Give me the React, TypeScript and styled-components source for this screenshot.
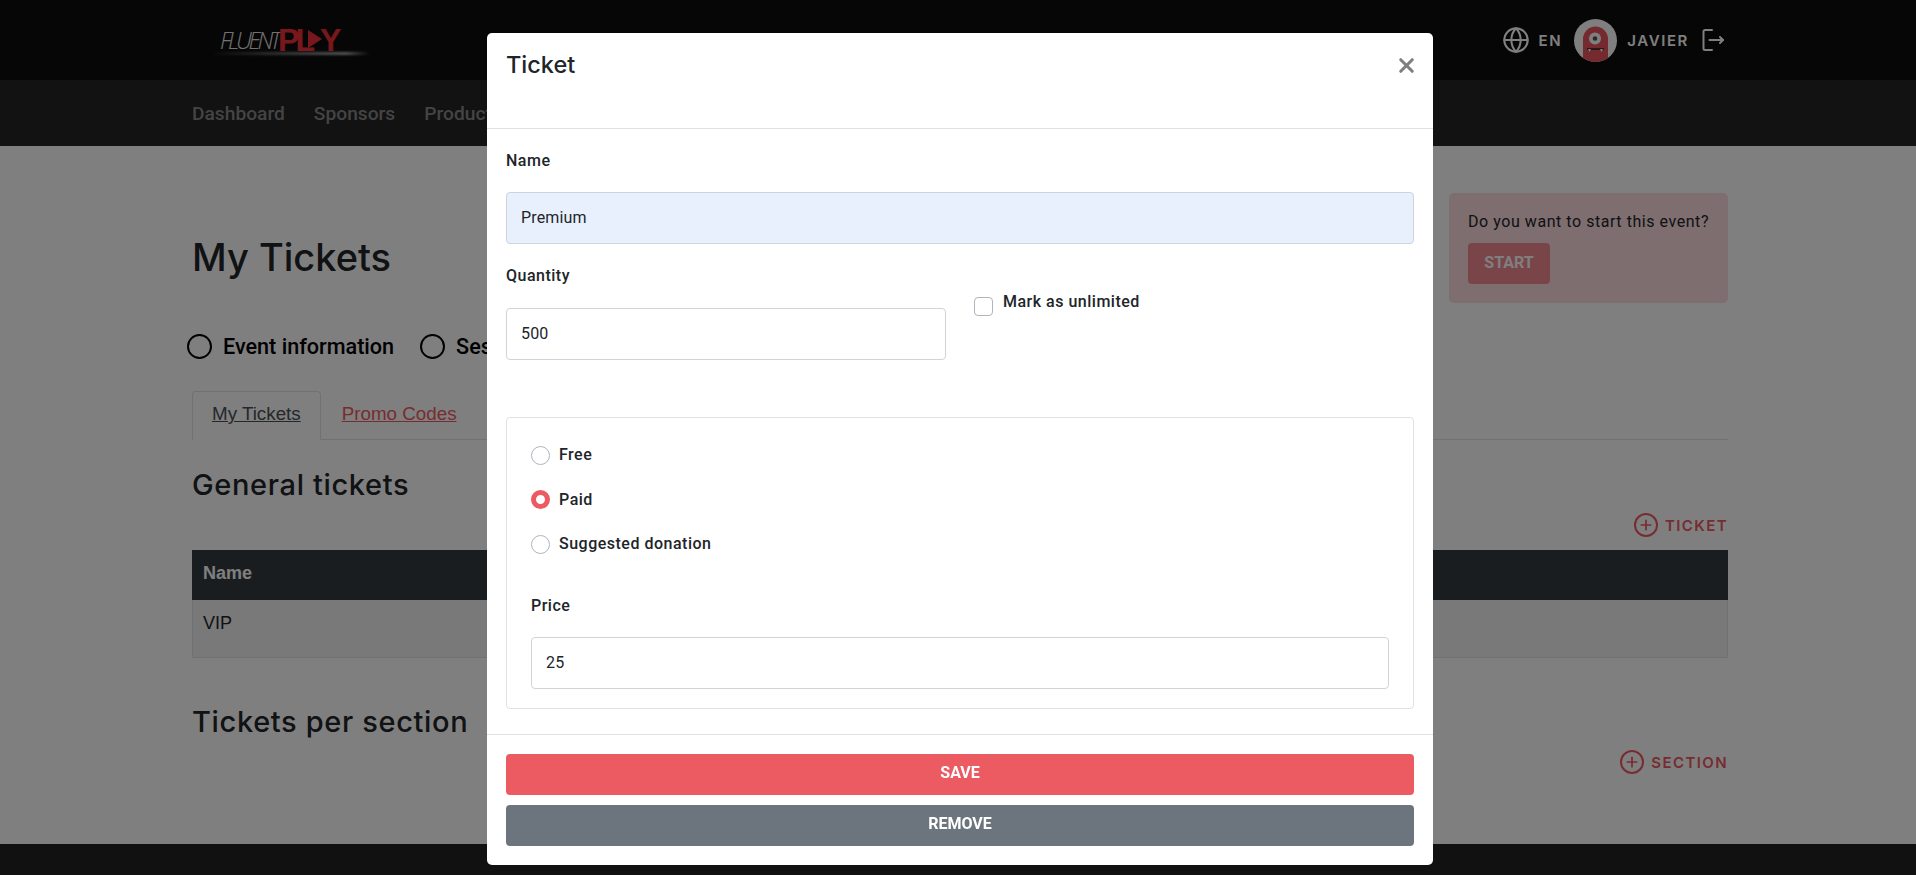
import styled, { createGlobalStyle } from "styled-components";
import { Globe, Plus, X } from "lucide-react";

const GlobalStyle = createGlobalStyle`
  html, body {
    margin: 0;
    padding: 0;
    height: 100%;
    background: #ffffff;
    overflow: hidden;
    font-family: Roboto, sans-serif;
    color: #212529;
  }
  * {
    box-sizing: border-box;
  }
`;

const Page = styled.div`
  display: flex;
  flex-direction: column;
  height: 875px;
`;

const TopBar = styled.header`
  display: flex;
  align-items: center;
  justify-content: space-between;
  height: 80px;
  flex: none;
  padding: 0 192px 0 220px;
  background: #0c0c0c;
`;

const Logo = styled.div`
  position: relative;
  display: flex;
  align-items: center;
  height: 40px;
  width: 150px;
  &::after {
    content: "";
    position: absolute;
    left: -10px;
    right: 0;
    bottom: 5px;
    height: 3px;
    background: linear-gradient(90deg, transparent, #555 35%, #aaa 85%, transparent);
    filter: blur(1px);
  }
`;

const LogoLight = styled.span`
  font-family: "Open Sans", sans-serif;
  font-style: italic;
  font-weight: 300;
  font-size: 23px;
  letter-spacing: -3.2px;
  color: #e4e4e4;
`;

const LogoBold = styled.span`
  display: flex;
  align-items: center;
  font-family: "Liberation Sans", sans-serif;
  font-weight: 700;
  font-size: 32px;
  letter-spacing: -4px;
  color: #f03038;
  line-height: 1;
`;

const LogoPlay = styled.i`
  display: block;
  width: 0;
  height: 0;
  margin: -3px -2px 0 -3px;
  border-left: 14px solid #f03038;
  border-top: 9px solid transparent;
  border-bottom: 9px solid transparent;
`;

const UserArea = styled.div`
  display: flex;
  align-items: center;
  color: #ffffff;
  svg {
    display: block;
  }
`;

const BarLabel = styled.span<{ $left: number; $right: number }>`
  font-family: Inter, sans-serif;
  font-weight: 600;
  font-size: 15px;
  letter-spacing: 1.6px;
  margin: 0 ${(p) => p.$right}px 0 ${(p) => p.$left}px;
`;

const Avatar = styled.div`
  width: 43px;
  height: 43px;
  border-radius: 50%;
  overflow: hidden;
  background: #ffffff;
`;

const NavBar = styled.nav`
  display: flex;
  align-items: center;
  gap: 29px;
  height: 66px;
  flex: none;
  padding: 0 192px;
  background: #242424;
`;

const NavLink = styled.a`
  font-size: 19.2px;
  font-weight: 500;
  color: #888888;
`;

const Content = styled.main`
  flex: 1;
  padding: 47px 188px 0 192px;
`;

const TitleRow = styled.div`
  display: flex;
  justify-content: space-between;
  align-items: flex-start;
  height: 138px;
`;

const PageTitle = styled.h1`
  margin: 41px 0 0;
  font-family: Inter, sans-serif;
  font-weight: 500;
  font-size: 38px;
  line-height: 46px;
`;

const StartCard = styled.div`
  width: 279px;
  height: 110px;
  padding: 19px 8px 19px 19px;
  border-radius: 5px;
  background: #fddcde;
`;

const StartText = styled.p`
  margin: 0 0 11px;
  font-size: 16px;
  line-height: 20px;
  letter-spacing: 0.55px;
  white-space: nowrap;
`;

const StartButton = styled.button`
  width: 82px;
  height: 41px;
  padding: 0 0 3px;
  border: 0;
  border-radius: 4px;
  background: #f48b92;
  color: #ffffff;
  font-family: Roboto, sans-serif;
  font-weight: 700;
  font-size: 16px;
`;

const Steps = styled.div`
  display: flex;
  align-items: center;
  height: 30px;
  margin-left: -5px;
`;

const StepCircle = styled.span`
  width: 25px;
  height: 25px;
  margin-right: 11px;
  border: 2.5px solid #000000;
  border-radius: 50%;
`;

const StepLabel = styled.span`
  margin-right: 26px;
  font-size: 21.6px;
  font-weight: 500;
  color: #000000;
`;

const Tabs = styled.div`
  display: flex;
  height: 49px;
  margin-top: 30px;
  border-bottom: 1px solid #dee2e6;
  font-family: "Liberation Sans", sans-serif;
  font-size: 18.8px;
`;

const Tab = styled.a<{ $active?: boolean }>`
  display: flex;
  align-items: center;
  height: 49px;
  padding: 0 ${(p) => (p.$active ? "19px" : "20px")} 3px;
  text-decoration: underline;
  color: ${(p) => (p.$active ? "#495057" : "#ec5a62")};
  border: 1px solid ${(p) => (p.$active ? "#dee2e6" : "transparent")};
  border-bottom-color: ${(p) => (p.$active ? "#ffffff" : "transparent")};
  border-radius: 4px 4px 0 0;
`;

const SectionTitle = styled.h2`
  margin: 0;
  font-family: Inter, sans-serif;
  font-weight: 500;
  font-size: 29px;
  letter-spacing: 0.65px;
  line-height: 34px;
`;

const AddRow = styled.div`
  display: flex;
  justify-content: flex-end;
  align-items: center;
  gap: 7px;
  margin-top: 11px;
  color: #ec5a62;
`;

const AddIcon = styled.span`
  display: flex;
  align-items: center;
  justify-content: center;
  width: 24px;
  height: 24px;
  border: 2px solid #ec5a62;
  border-radius: 50%;
`;

const AddLabel = styled.span`
  font-family: Inter, sans-serif;
  font-weight: 600;
  font-size: 15px;
  letter-spacing: 1.4px;
`;

const Table = styled.div`
  margin-top: 13px;
  font-family: "Liberation Sans", sans-serif;
  font-size: 18px;
`;

const TableHead = styled.div`
  height: 50px;
  padding: 13px 11px;
  background: #343a40;
  color: #ffffff;
  font-weight: 700;
`;

const TableRow = styled.div`
  height: 58px;
  padding: 13px 10px;
  background: #f2f2f2;
  border: 1px solid #dee2e6;
  border-top: 0;
`;

const GeneralBlock = styled.section`
  margin-top: 28px;
`;

const SectionBlock = styled.section`
  margin-top: 47px;
`;

const Footer = styled.footer`
  height: 31px;
  flex: none;
  background: #222222;
`;

const Overlay = styled.div`
  position: fixed;
  inset: 0;
  display: flex;
  justify-content: center;
  align-items: flex-start;
  padding-top: 33px;
  background: rgba(0, 0, 0, 0.5);
`;

const Modal = styled.div`
  width: 946px;
  height: 832px;
  margin-left: 4px;
  display: flex;
  flex-direction: column;
  background: #ffffff;
  border-radius: 5px;
`;

const ModalHeader = styled.div`
  display: flex;
  justify-content: space-between;
  align-items: flex-start;
  height: 96px;
  flex: none;
  padding: 17px 19px;
  border-bottom: 1px solid #dee2e6;
`;

const ModalTitle = styled.h3`
  margin: 0;
  font-family: Inter, sans-serif;
  font-weight: 500;
  font-size: 23.5px;
  line-height: 30px;
`;

const CloseButton = styled.button`
  display: flex;
  padding: 0;
  margin: 4px -4px 0 0;
  border: 0;
  background: none;
  color: #7f7f7f;
`;

const ModalBody = styled.div`
  flex: 1;
  padding: 22px 19px 0;
`;

const FieldLabel = styled.label`
  display: block;
  height: 20px;
  margin-bottom: 21px;
  font-size: 16px;
  font-weight: 500;
  line-height: 20px;
  letter-spacing: 0.5px;
  color: #212529;
`;

const TextInput = styled.input<{ $filled?: boolean }>`
  display: block;
  width: 100%;
  height: 52px;
  padding: 0 14px 2px;
  border: 1px solid #ced4da;
  border-radius: 4px;
  background: ${(p) => (p.$filled ? "#e8f0fe" : "#ffffff")};
  font-family: Roboto, sans-serif;
  font-size: 16px;
  letter-spacing: 0.15px;
  color: #212529;
  outline: none;
`;

const NameField = styled.div`
  margin-bottom: 22px;
`;

const QuantityRow = styled.div`
  display: flex;
  align-items: flex-start;
`;

const QuantityField = styled.div`
  width: 440px;
  label {
    margin-bottom: 22px;
  }
`;

const UnlimitedLabel = styled.div`
  display: flex;
  align-items: flex-start;
  gap: 10px;
  margin: 26px 0 0 28px;
`;

const CheckBox = styled.span`
  width: 19px;
  height: 19px;
  margin-top: 5px;
  border: 1px solid #adb5bd;
  border-radius: 4px;
`;

const OptionText = styled.span`
  font-size: 16px;
  font-weight: 500;
  line-height: 20px;
  letter-spacing: 0.5px;
`;

const PriceBox = styled.div`
  height: 292px;
  margin-top: 57px;
  padding: 27px 24px;
  border: 1px solid #dee2e6;
  border-radius: 4px;
`;

const RadioList = styled.div`
  display: flex;
  flex-direction: column;
  gap: 24.5px;
  margin-bottom: 42px;
`;

const RadioRow = styled.div`
  display: flex;
  align-items: center;
  gap: 9px;
  height: 20px;
`;

const RadioDot = styled.span<{ $on?: boolean }>`
  width: 19px;
  height: 19px;
  border-radius: 50%;
  background: #ffffff;
  border: ${(p) => (p.$on ? "5px solid #ec5a62" : "1px solid #adb5bd")};
`;

const ModalFooter = styled.div`
  display: flex;
  flex-direction: column;
  gap: 10px;
  height: 131px;
  flex: none;
  padding: 19px 19px 0;
  border-top: 1px solid #dee2e6;
`;

const WideButton = styled.button<{ $tone: string }>`
  height: 41px;
  padding: 0 0 4px;
  border: 0;
  border-radius: 4px;
  background: ${(p) => p.$tone};
  color: #ffffff;
  font-family: Roboto, sans-serif;
  font-weight: 700;
  font-size: 16px;
`;

const MonsterAvatar = () => (
  <svg width="43" height="43" viewBox="0 0 43 43">
    <path d="M9 43V20a12.5 12.5 0 0 1 25 0v23z" fill="#e9545c" />
    <circle cx="21" cy="19.5" r="6" fill="#ffffff" />
    <circle cx="21" cy="19.5" r="2.3" fill="#555555" />
    <path d="M13 30h17" stroke="#222222" strokeWidth="1.4" />
    <path d="M14 30h3l-1.5 3zM26 30h3l-1.5 3z" fill="#ffffff" />
  </svg>
);

const LogoutIcon = () => (
  <svg width="22" height="22" viewBox="0 0 22 22" fill="none" stroke="currentColor" strokeWidth="2" strokeLinecap="round" strokeLinejoin="round">
    <path d="M10 1H3a1.5 1.5 0 0 0-1.5 1.5v17A1.5 1.5 0 0 0 3 21h7" />
    <path d="M7.5 11H21" />
    <path d="M18 8l3 3-3 3" />
  </svg>
);

const AddAction = ({ label }: { label: string }) => (
  <AddRow>
    <AddIcon>
      <Plus size={16} strokeWidth={2.6} />
    </AddIcon>
    <AddLabel>{label}</AddLabel>
  </AddRow>
);

const App = () => {
  return (
    <>
      <GlobalStyle />
      <Page>
        <TopBar>
          <Logo>
            <LogoLight>FLUENT</LogoLight>
            <LogoBold>
              PL
              <LogoPlay />Y
            </LogoBold>
          </Logo>
          <UserArea>
            <Globe size={28} strokeWidth={1.8} />
            <BarLabel $left={9} $right={12}>EN</BarLabel>
            <Avatar>
              <MonsterAvatar />
            </Avatar>
            <BarLabel $left={10} $right={13}>JAVIER</BarLabel>
            <LogoutIcon />
          </UserArea>
        </TopBar>

        <NavBar>
          <NavLink>Dashboard</NavLink>
          <NavLink>Sponsors</NavLink>
          <NavLink>Products</NavLink>
        </NavBar>

        <Content>
          <TitleRow>
            <PageTitle>My Tickets</PageTitle>
            <StartCard>
              <StartText>Do you want to start this event?</StartText>
              <StartButton>START</StartButton>
            </StartCard>
          </TitleRow>

          <Steps>
            <StepCircle />
            <StepLabel>Event information</StepLabel>
            <StepCircle />
            <StepLabel>Sessions</StepLabel>
          </Steps>

          <Tabs>
            <Tab $active>My Tickets</Tab>
            <Tab>Promo Codes</Tab>
          </Tabs>

          <GeneralBlock>
            <SectionTitle>General tickets</SectionTitle>
            <AddAction label="TICKET" />
            <Table>
              <TableHead>Name</TableHead>
              <TableRow>VIP</TableRow>
            </Table>
          </GeneralBlock>

          <SectionBlock>
            <SectionTitle>Tickets per section</SectionTitle>
            <AddAction label="SECTION" />
          </SectionBlock>
        </Content>

        <Footer />
      </Page>

      <Overlay>
        <Modal>
          <ModalHeader>
            <ModalTitle>Ticket</ModalTitle>
            <CloseButton>
              <X size={23} strokeWidth={3.2} />
            </CloseButton>
          </ModalHeader>

          <ModalBody>
            <NameField>
              <FieldLabel>Name</FieldLabel>
              <TextInput $filled defaultValue="Premium" />
            </NameField>

            <QuantityRow>
              <QuantityField>
                <FieldLabel>Quantity</FieldLabel>
                <TextInput defaultValue="500" />
              </QuantityField>
              <UnlimitedLabel>
                <CheckBox />
                <OptionText>Mark as unlimited</OptionText>
              </UnlimitedLabel>
            </QuantityRow>

            <PriceBox>
              <RadioList>
                <RadioRow>
                  <RadioDot />
                  <OptionText>Free</OptionText>
                </RadioRow>
                <RadioRow>
                  <RadioDot $on />
                  <OptionText>Paid</OptionText>
                </RadioRow>
                <RadioRow>
                  <RadioDot />
                  <OptionText>Suggested donation</OptionText>
                </RadioRow>
              </RadioList>
              <FieldLabel>Price</FieldLabel>
              <TextInput defaultValue="25" />
            </PriceBox>
          </ModalBody>

          <ModalFooter>
            <WideButton $tone="#ec5a62">SAVE</WideButton>
            <WideButton $tone="#6c757d">REMOVE</WideButton>
          </ModalFooter>
        </Modal>
      </Overlay>
    </>
  );
};

export default App;
